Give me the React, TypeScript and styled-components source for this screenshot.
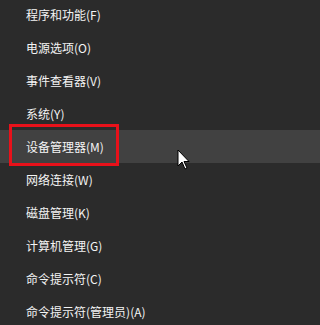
import React from "react";
import styled, { createGlobalStyle } from "styled-components";

const GlobalStyle = createGlobalStyle`
  html, body {
    margin: 0;
    padding: 0;
    background: #2b2b2b;
  }
  body {
    font-family: "Microsoft YaHei", "Noto Sans CJK SC", "Noto Sans", sans-serif;
  }
`;

const items = [
  { label: "程序和功能", key: "F" },
  { label: "电源选项", key: "O" },
  { label: "事件查看器", key: "V" },
  { label: "系统", key: "Y" },
  { label: "设备管理器", key: "M", hover: true },
  { label: "网络连接", key: "W" },
  { label: "磁盘管理", key: "K" },
  { label: "计算机管理", key: "G" },
  { label: "命令提示符", key: "C" },
  { label: "命令提示符(管理员)", key: "A" },
];

const Screen = styled.div`
  position: relative;
  width: 100%;
  min-width: 212px;
  height: 325px;
  overflow: hidden;
  background: #2b2b2b;
`;

const Menu = styled.ul`
  list-style: none;
  margin: 0;
  padding: 0;
  transform: translateY(-2px);
  display: flex;
  flex-direction: column;
`;

const Item = styled.li<{ $hover?: boolean }>`
  height: 33px;
  display: flex;
  align-items: center;
  padding-left: 26px;
  font-size: 12px;
  color: #f4f4f4;
  white-space: nowrap;
  background: ${(p) => (p.$hover ? "#414141" : "transparent")};
`;

const Highlight = styled.div`
  position: absolute;
  left: 9px;
  top: 124px;
  width: 110px;
  height: 42px;
  box-sizing: border-box;
  border: 3px solid #e8111a;
`;

const Cursor = styled.svg`
  position: absolute;
  left: 177px;
  top: 149px;
`;

export default function App() {
  return (
    <>
      <GlobalStyle />
      <Screen>
        <Menu>
          {items.map((it) => (
            <Item key={it.key} $hover={it.hover}>
              {it.label}({it.key})
            </Item>
          ))}
        </Menu>
        <Highlight />
        <Cursor width="13" height="21" viewBox="0 0 13 21">
          <path
            d="M1 1 L1 17 L5 13 L8 20 L10 19 L7 12.5 L12 12.5 Z"
            fill="#ffffff"
            stroke="#000000"
            strokeWidth="1"
            strokeLinejoin="miter"
          />
        </Cursor>
      </Screen>
    </>
  );
}
